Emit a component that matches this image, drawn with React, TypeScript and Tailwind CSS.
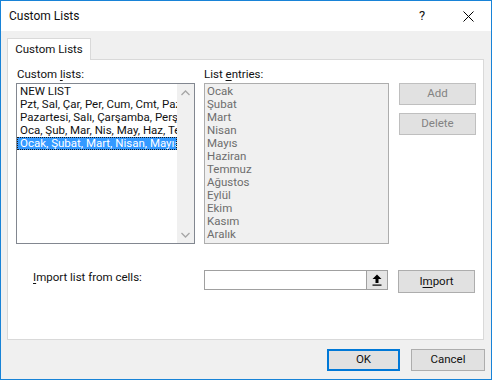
import React from "react";

const font = "font-['Segoe_UI',Roboto,'Noto_Sans',sans-serif]";

function ChevronUp() {
  return (
    <svg width="9" height="6" viewBox="0 0 9 6">
      <path d="M0.5 5 L4.5 1 L8.5 5" fill="none" stroke="#a6a6a6" strokeWidth="1.3" />
    </svg>
  );
}
function ChevronDown() {
  return (
    <svg width="9" height="6" viewBox="0 0 9 6">
      <path d="M0.5 1 L4.5 5 L8.5 1" fill="none" stroke="#a6a6a6" strokeWidth="1.3" />
    </svg>
  );
}

const leftItems = [
  "NEW LIST",
  "Pzt, Sal, Çar, Per, Cum, Cmt, Paz",
  "Pazartesi, Salı, Çarşamba, Perşembe, Cuma, Cumartesi, Pazar",
  "Oca, Şub, Mar, Nis, May, Haz, Tem, Ağu, Eyl, Eki, Kas, Ara",
  "Ocak, Şubat, Mart, Nisan, Mayıs, Haziran, Temmuz, Ağustos, Eylül, Ekim, Kasım, Aralık",
];

const rightItems = [
  "Ocak",
  "Şubat",
  "Mart",
  "Nisan",
  "Mayıs",
  "Haziran",
  "Temmuz",
  "Ağustos",
  "Eylül",
  "Ekim",
  "Kasım",
  "Aralık",
];

export default function App() {
  return (
    <div
      className={`w-[492px] h-[380px] border border-[#1883d7] bg-[#f0f0f0] flex flex-col text-[11.5px] text-[#111] ${font} overflow-hidden`}
    >
      {/* Title bar */}
      <div className="h-[30px] bg-white flex items-center shrink-0 text-[12px]">
        <div className="pl-[8px] flex-1">Custom Lists</div>
        <div className="w-[46px] h-full flex items-center justify-center text-[13px]">?</div>
        <div className="w-[46px] h-full flex items-center justify-center">
          <svg width="11" height="11" viewBox="0 0 11 11">
            <path d="M0.5 0.5 L10.5 10.5 M10.5 0.5 L0.5 10.5" stroke="#000" strokeWidth="1" fill="none" />
          </svg>
        </div>
      </div>

      {/* Body */}
      <div className="flex flex-col px-[6px]">
        <div className="mt-[7px] w-[84px] h-[22px] border border-b-0 border-[#d9d9d9] bg-white relative z-10 -mb-[1px] flex items-center justify-center">
          Custom Lists
        </div>
        <div className="w-[477px] h-[281px] border border-[#d9d9d9] bg-white flex flex-col">
          <div className="flex pl-[8px] pt-[6px]">
            {/* left column */}
            <div className="w-[179px] flex flex-col">
              <div className="h-[16px] leading-[16px] pl-[1px] mb-[1px]">
                Custom <u className="underline-offset-2">l</u>ists:
              </div>
              <div className="h-[161px] border border-[#828790] bg-white flex">
                <div className="flex-1 min-w-0 overflow-hidden pt-[1px]">
                  {leftItems.map((t, i) => (
                    <div
                      key={i}
                      className={`h-[13px] leading-[13px] pl-[3px] whitespace-nowrap overflow-hidden ${
                        i === 4 ? "bg-[#3399ff] text-white outline outline-1 outline-dotted outline-[#1a1a1a] -outline-offset-1" : ""
                      }`}
                    >
                      {t}
                    </div>
                  ))}
                </div>
                <div className="w-[17px] bg-[#f0f0f0] flex flex-col justify-between">
                  <div className="h-[17px] flex items-center justify-center">
                    <ChevronUp />
                  </div>
                  <div className="h-[17px] flex items-center justify-center">
                    <ChevronDown />
                  </div>
                </div>
              </div>
            </div>

            {/* right column */}
            <div className="w-[185px] ml-[9px] flex flex-col">
              <div className="h-[16px] leading-[16px] mb-[1px]">
                List <u className="underline-offset-2">e</u>ntries:
              </div>
              <div className="h-[161px] border border-[#adadad] bg-[#f0f0f0] pt-[1px] pl-[2px] text-[#6d6d6d] overflow-hidden">
                {rightItems.map((t) => (
                  <div key={t} className="h-[13px] leading-[13px] whitespace-nowrap">
                    {t}
                  </div>
                ))}
              </div>
            </div>

            {/* buttons */}
            <div className="w-[77px] ml-[10px] flex flex-col pt-[17px] gap-[8px]">
              <div className="h-[22px] border border-[#bfbfbf] bg-[#e1e1e1] text-[#838383] flex items-center justify-center">
                Add
              </div>
              <div className="h-[22px] border border-[#bfbfbf] bg-[#e1e1e1] text-[#838383] flex items-center justify-center">
                Delete
              </div>
            </div>
          </div>

          {/* Import row */}
          <div className="flex items-start mt-[26px] pl-[25px]">
            <div className="w-[171px] mt-[-1px] leading-[16px]">
              <u className="underline-offset-2">I</u>mport list from cells:
            </div>
            <div className="w-[184px] h-[20px] border border-[#a0a0a0] bg-white flex justify-end">
              <div className="w-[21px] h-full bg-[#e5e5e5] border-l border-[#a0a0a0] flex items-center justify-center">
                <svg width="10" height="12" viewBox="0 0 10 12">
                  <path d="M5 0.5 L9.5 5 L6.5 5 L6.5 9 L3.5 9 L3.5 5 L0.5 5 Z" fill="#000" />
                  <rect x="0.5" y="10.5" width="9" height="1.2" fill="#000" />
                </svg>
              </div>
            </div>
            <div className="w-[77px] h-[23px] ml-[10px] border border-[#adadad] bg-[#e1e1e1] flex items-center justify-center">
              I<u className="underline-offset-2">m</u>port
            </div>
          </div>
        </div>

        {/* Footer */}
        <div className="flex justify-end mt-[9px]">
          <div className="w-[73px] h-[22px] border-2 border-[#0078d7] bg-[#e1e1e1] flex items-center justify-center">
            OK
          </div>
          <div className="w-[74px] h-[22px] ml-[11px] border border-[#adadad] bg-[#e1e1e1] flex items-center justify-center">
            Cancel
          </div>
        </div>
      </div>
    </div>
  );
}
